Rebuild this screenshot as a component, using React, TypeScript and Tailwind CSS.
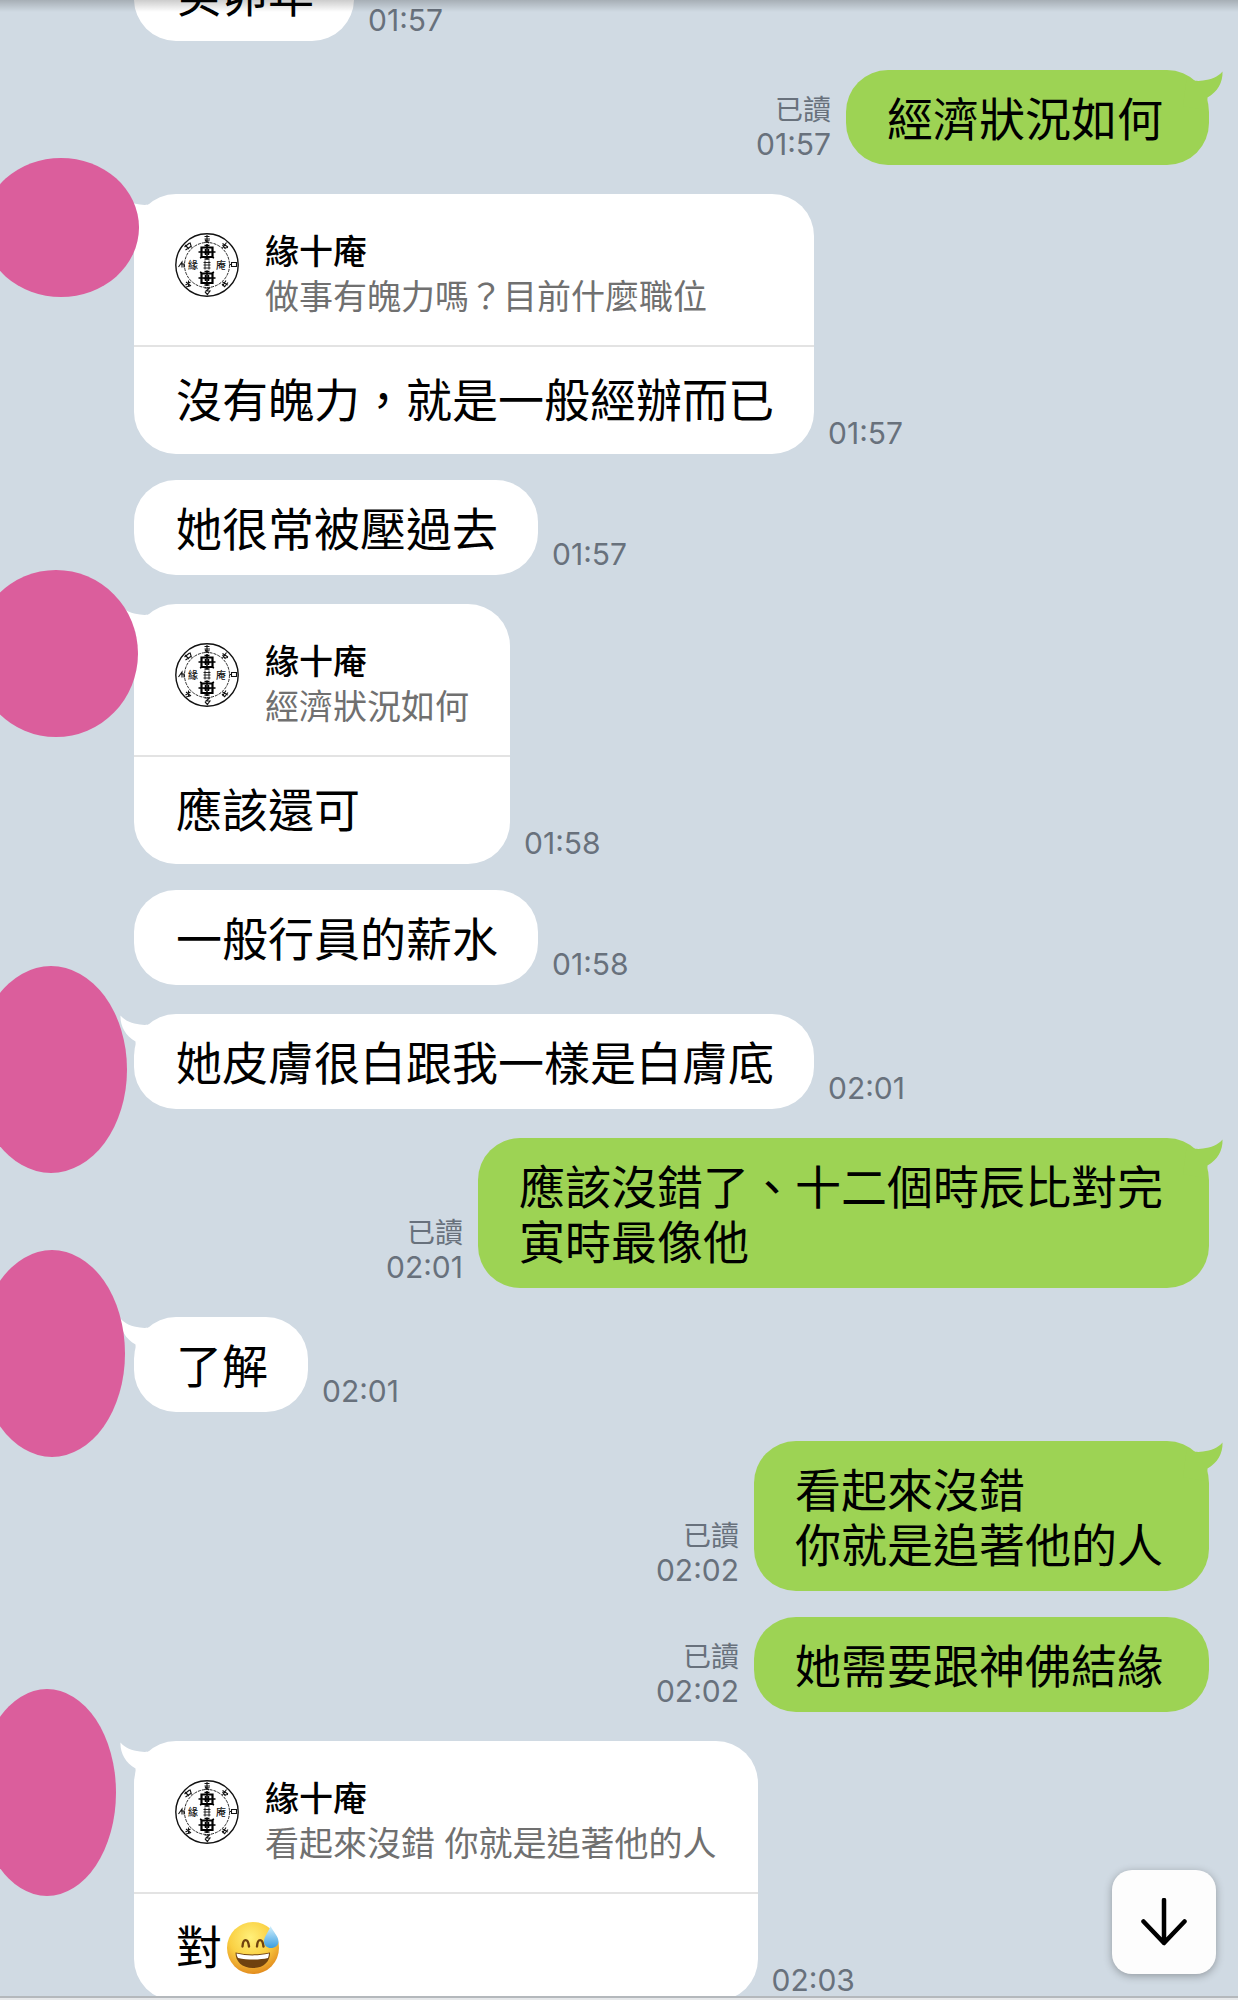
import type { ReactNode } from 'react'

type Blob = 'a' | 'b' | 'c' | 'd' | 'e'

const blobStyles: Record<Blob, string> = {
	a: '-left-[17px] -top-[36px] w-[156px] h-[139px]',
	b: '-left-[26px] -top-[34px] w-[164px] h-[167px]',
	c: '-left-[25px] -top-[48px] w-[152px] h-[207px]',
	d: '-left-[21px] -top-[67px] w-[146px] h-[207px]',
	e: '-left-[22px] -top-[52px] w-[138px] h-[207px]',
}

function Tail ({ side }: { side: 'left' | 'right' }) {
	return (
		<svg
			viewBox="0 0 42 40"
			aria-hidden="true"
			className={side === 'right'
				? 'absolute top-0 -right-4 w-[42px] h-10 text-[#9dd354]'
				: 'absolute top-0 -left-4 w-[42px] h-10 text-white -scale-x-100'}
		>
			<path
				fill="currentColor"
				d="M4 6C8 11 14 11.5 20 10.500C28 9.500 35 7 39.500 1.500C40 12 34.500 22 24.500 27.500L24 40L0 36Z"
			/>
		</svg>
	)
}

function Seal () {
	return (
		<svg viewBox="0 0 64 64" role="img" aria-label="緣十庵" className="mt-1 size-16 shrink-0" fill="none" stroke="#111">
			<circle cx="32" cy="32" r="31.200" strokeWidth="1.400" />
			<circle cx="32" cy="32" r="22.500" strokeWidth="0.900" strokeDasharray="3 1" />
			<g strokeWidth="1.100">
				<path d="M29.500 3.500h5M32 2v7M29.500 6h5.500M29.500 9.500l5-2M30 7l4 3" />
				<path d="M47.500 10.500l5.500 3.500M51.500 9.500l-4 5.500M49 15l4-.5M47.500 12l3 4" />
				<path d="M56.500 29.500h5v4h-5zM54.500 31.500h2" />
				<path d="M47.500 49l5.500 3M51 47.500l-3.500 5.500M49.500 54l3.500-4.500M47 51l3 3" />
				<path d="M29.500 55h5l-3.500 3h4l-3 4M30 59l3 3" />
				<path d="M11 49l5 4M10.500 52l5-3M13.500 47.500v6M11 54l4-1" />
				<path d="M3.500 34l3.500-5v5.500M5.500 31h3.500v3.500" />
				<path d="M9.500 14l5-4M10.500 17l6-4M15 9.500l1.500 5M10 12l4 4" />
			</g>
			<g stroke="#000">
				<path d="M32 11v15M23.500 19h17M27 24l-2 1M37 24l2 1" strokeWidth="1.500" />
				<path d="M26.500 14.500h11v9.500h-11z" strokeWidth="2.200" />
				<path d="M29.500 12.500h5M28.500 19.500h7M30.500 16v6M33.500 16v6M29.500 26h5" strokeWidth="1.500" />
				<path d="M32 37.500v15.500M23.500 45h17M27 40l-2-1M37 40l2-1" strokeWidth="1.500" />
				<path d="M26.500 40.500h11v9.500h-11z" strokeWidth="2.200" />
				<path d="M29.500 38.500h5M28.500 45.500h7M30.500 42v6M33.500 42v6M29.500 52h5" strokeWidth="1.500" />
			</g>
			<path d="M28.500 29.500h7M28.500 32h7M28.500 35h7M30 27.500v9M34 27.500v9" strokeWidth="0.900" />
			<g fill="#111" stroke="none" fontSize="10" fontWeight="500" textAnchor="middle">
				<text x="18" y="36">{'緣'}</text>
				<text x="46" y="36">{'庵'}</text>
			</g>
		</svg>
	)
}

function SweatSmile () {
	return (
		<svg viewBox="0 0 54 54" role="img" aria-label="😅" className="size-[54px] shrink-0">
			<defs>
				<radialGradient id="face" cx="0.45" cy="0.3" r="0.72">
					<stop offset="0" stopColor="#fff07a" />
					<stop offset="0.55" stopColor="#fad043" />
					<stop offset="1" stopColor="#e2891d" />
				</radialGradient>
				<linearGradient id="drop" x1="0" y1="0" x2="0" y2="1">
					<stop offset="0" stopColor="#d2f0fd" />
					<stop offset="1" stopColor="#3a9ee0" />
				</linearGradient>
			</defs>
			<circle cx="27" cy="27" r="26" fill="url(#face)" />
			<path d="M16.500 25.500c.5-8.500 5.500-8.500 6.500 0M31 25.500c.5-8.500 5.500-8.500 6.500 0" fill="none" stroke="#70420f" strokeWidth="2.400" strokeLinecap="round" />
			<path d="M9.500 31.500c11 2.500 23 2.500 34.500 0c0 9-6 15.500-17 15.500s-17.500-6.500-17.500-15.500z" fill="#70420f" />
			<path d="M10.500 32.500c11 2.500 21 2.500 32.500 0c0 1.500-.5 3-1 4.500c-9 2-20 2-30 0c-1-1.500-1.500-3-1.500-4.500z" fill="#fff" />
			<path d="M44.500 5c3 6 8 10.500 8 15.500c0 4-3.500 6.500-7.500 6.500s-7-2.500-7-6.500c0-5 4.500-9.500 6.500-15.500z" fill="url(#drop)" />
		</svg>
	)
}

function Stamp ({ time, read }: { time: string, read?: boolean }) {
	return (
		<div className="flex flex-col pb-1 text-[30px] leading-[34px] text-[#68717c] text-right whitespace-nowrap">
			{read && <span className="text-[28px]">{'已讀'}</span>}
			<time>{time}</time>
		</div>
	)
}

function Sent ({ time, tail, children }: { time: string, tail?: boolean, children: ReactNode }) {
	return (
		<li className={`flex items-end justify-end gap-[15px] pl-[134px] pr-[29px] ${tail ? 'mt-[29px]' : 'mt-[26px]'}`}>
			<Stamp time={time} read />
			<div className="relative rounded-[42px] bg-[#9dd354] pl-[41px] pr-[46px] pt-[22px] pb-[18px]">
				{tail && <Tail side="right" />}
				<p className="relative">{children}</p>
			</div>
		</li>
	)
}

interface ReceivedProps {
	time: string
	blob?: Blob
	quote?: string
	children: ReactNode
}

function Received ({ time, blob, quote, children }: ReceivedProps) {
	return (
		<li className={`relative flex items-end gap-[14px] pl-[134px] ${blob ? 'mt-[29px]' : 'mt-[26px]'}`}>
			<div className="relative rounded-[42px] bg-white">
				{blob && <Tail side="left" />}
				{quote && (
					<blockquote className="relative flex gap-[26px] border-b-2 border-[#e3e3e3] px-[41px] pt-[35px] pb-[26px] text-[34px] leading-[45px]">
						<Seal />
						<div className="whitespace-nowrap">
							<cite className="block font-medium not-italic text-black">{'緣十庵'}</cite>
							<p className="text-[#707070]">{quote}</p>
						</div>
					</blockquote>
				)}
				<div className={`relative flex items-center pl-[42px] pr-10 ${quote ? 'h-[107px]' : 'pt-[22px] pb-[18px]'}`}>
					{children}
				</div>
			</div>
			<Stamp time={time} />
			{blob && <span className={`absolute rounded-[50%] bg-[#db5e9c] ${blobStyles[blob]}`} />}
		</li>
	)
}

export default function App () {
	return (
		<main
			lang="zh-Hant"
			className="relative h-screen overflow-hidden border-b-2 border-[#e6e8ea] bg-[#d0dae3] font-['Inter','Noto_Sans_CJK_TC',sans-serif] text-[46px] leading-[55px] text-black"
		>
			<ol className="-mt-[80px]">
				<Received time="01:57">{'癸卯年'}</Received>
				<Sent time="01:57" tail>{'經濟狀況如何'}</Sent>
				<Received time="01:57" blob="a" quote="做事有魄力嗎？目前什麼職位">{'沒有魄力，就是一般經辦而已'}</Received>
				<Received time="01:57">{'她很常被壓過去'}</Received>
				<Received time="01:58" blob="b" quote="經濟狀況如何">{'應該還可'}</Received>
				<Received time="01:58">{'一般行員的薪水'}</Received>
				<Received time="02:01" blob="c">{'她皮膚很白跟我一樣是白膚底'}</Received>
				<Sent time="02:01" tail>
					{'應該沒錯了、十二個時辰比對完'}
					<br />
					{'寅時最像他'}
				</Sent>
				<Received time="02:01" blob="d">{'了解'}</Received>
				<Sent time="02:02" tail>
					{'看起來沒錯'}
					<br />
					{'你就是追著他的人'}
				</Sent>
				<Sent time="02:02">{'她需要跟神佛結緣'}</Sent>
				<Received time="02:03" blob="e" quote="看起來沒錯 你就是追著他的人">
					<span className="mr-1">{'對'}</span>
					<SweatSmile />
				</Received>
			</ol>

			<div className="absolute inset-x-0 top-0 h-3 bg-linear-to-b from-black/20 to-transparent" />
			<div className="absolute inset-x-0 bottom-0 h-[2px] bg-[#b4b8bc]" />

			<button
				type="button"
				aria-label="捲動至最新訊息"
				className="absolute bottom-6 right-[22px] flex size-[104px] items-center justify-center rounded-[20px] bg-[#fdfdfd] shadow-[0_2px_8px_rgba(0,0,0,0.3)]"
			>
				<svg viewBox="0 0 48 48" className="size-12" fill="none" stroke="#000" strokeWidth="4.500" strokeLinecap="round" strokeLinejoin="round">
					<path d="M24 2v43M3.500 23.500L24 45l20.500-21.500" />
				</svg>
			</button>
		</main>
	)
}
